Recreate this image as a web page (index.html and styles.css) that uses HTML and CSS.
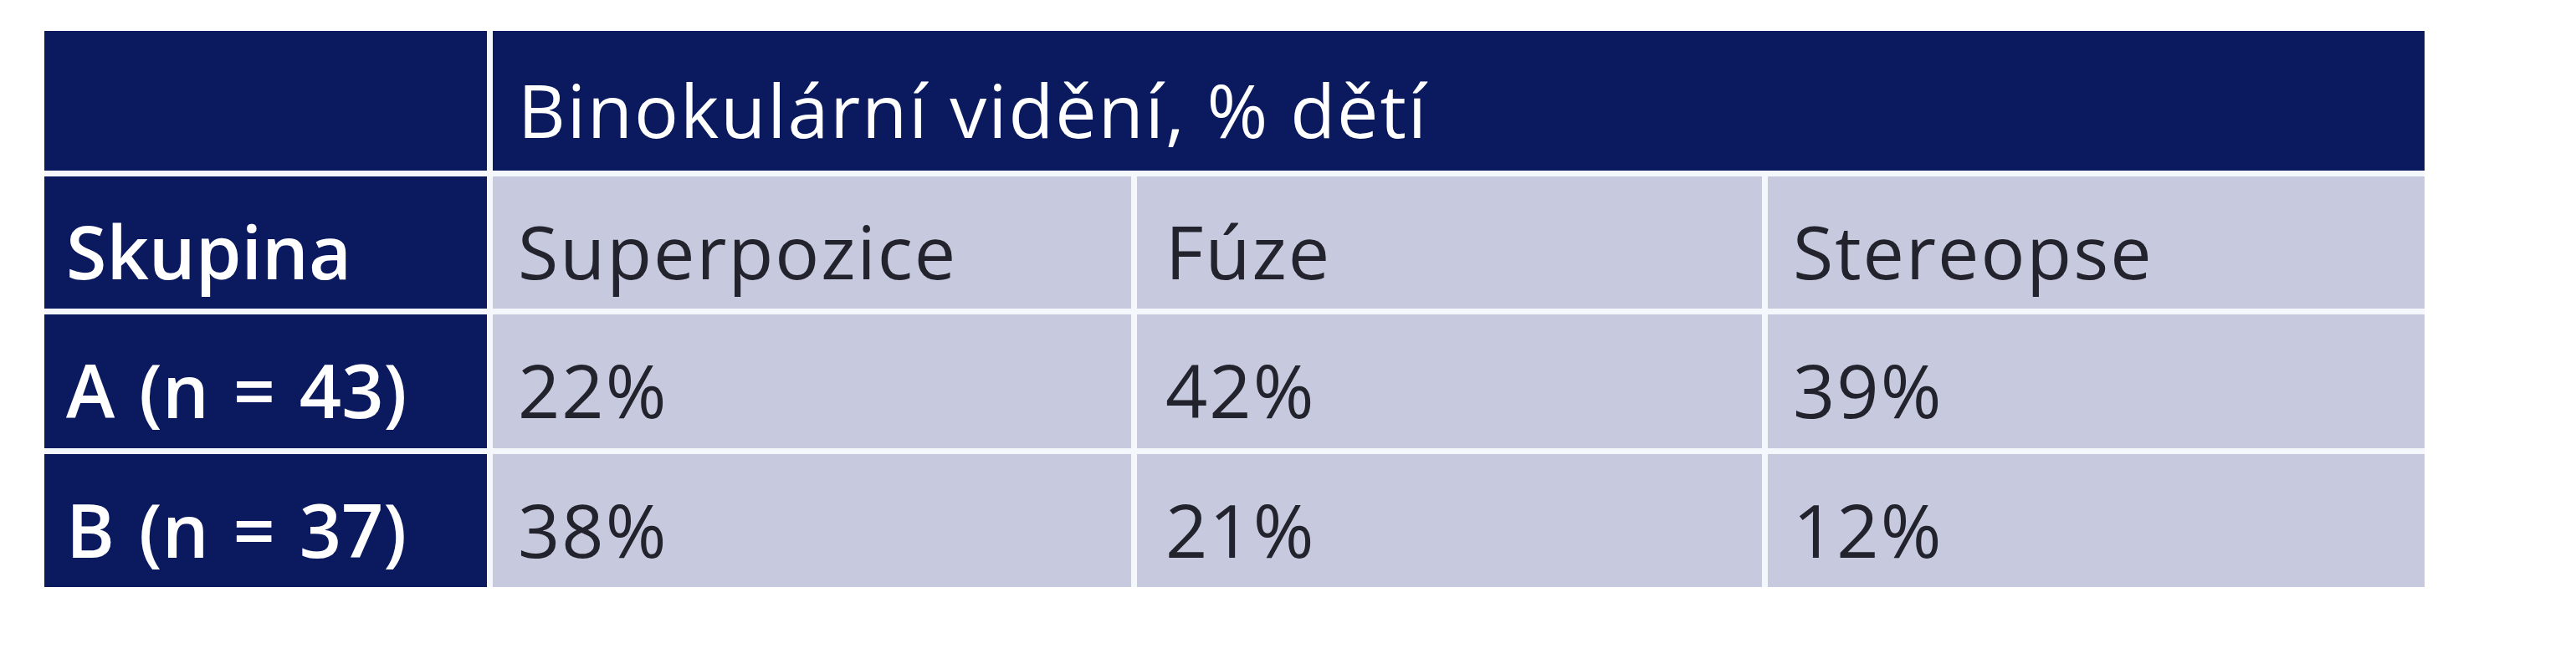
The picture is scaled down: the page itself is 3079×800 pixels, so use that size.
FILE: index.html
```html
<!DOCTYPE html>
<html lang="cs">
<head>
<meta charset="utf-8">
<title>Binokulární vidění</title>
<link rel="stylesheet" href="styles.css">
</head>
<body>
<div class="page">
  <div class="table">
    <div class="cell dark"></div>
    <div class="cell dark span3 head">Binokulární vidění, % dětí</div>

    <div class="cell dark label">Skupina</div>
    <div class="cell light">Superpozice</div>
    <div class="cell light c3">Fúze</div>
    <div class="cell light">Stereopse</div>

    <div class="cell dark label">A (n = 43)</div>
    <div class="cell light">22%</div>
    <div class="cell light c3">42%</div>
    <div class="cell light">39%</div>

    <div class="cell dark label">B (n = 37)</div>
    <div class="cell light">38%</div>
    <div class="cell light c3">21%</div>
    <div class="cell light">12%</div>
  </div>
</div>
</body>
</html>
```

FILE: styles.css
```css
html, body {
  margin: 0;
  padding: 0;
  background: #ffffff;
}

.page {
  padding: 37px 0 0 53px;
}

.table {
  display: grid;
  grid-template-columns: 529px 763px 747px 785px;
  grid-template-rows: 167px 158px 160px 159px;
  column-gap: 7px;
  row-gap: 7px;
  width: max-content;
  background: #f4f7fc;
  font-family: "Open Sans", Lato, sans-serif;
  font-size: 88px;
  line-height: 1;
}

.cell {
  display: flex;
  align-items: center;
  padding: 20px 0 0 30px;
  box-sizing: border-box;
  white-space: nowrap;
  letter-spacing: 2px;
}

.dark {
  background: #0b1a5e;
  color: #ffffff;
}

.light {
  background: #c7c9de;
  color: #22232c;
}

.span3 {
  grid-column: 2 / 5;
}

.label {
  font-weight: 600;
  padding-left: 26px;
  letter-spacing: 0;
  word-spacing: 6px;
}

.c3 {
  padding-left: 34px;
}
```
